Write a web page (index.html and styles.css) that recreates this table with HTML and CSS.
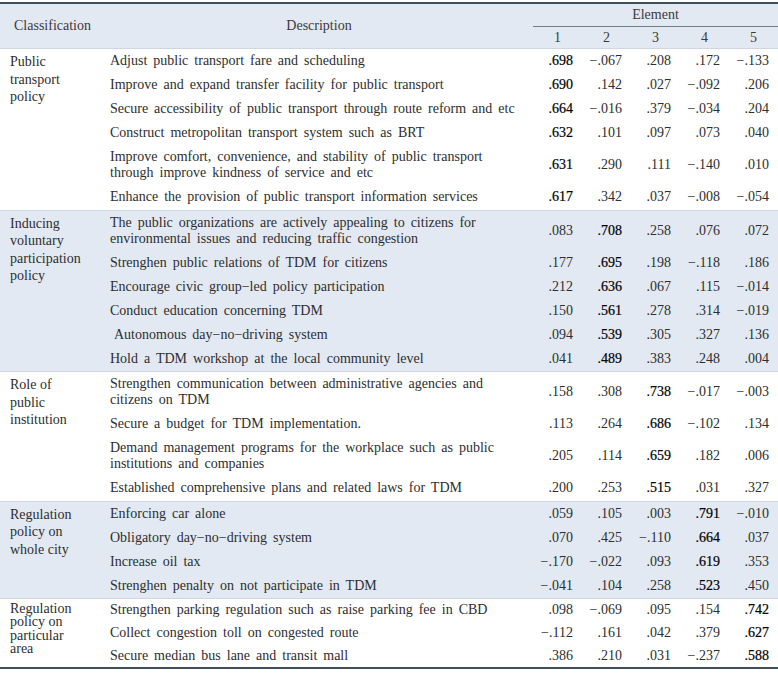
FILE: index.html
```html
<!DOCTYPE html>
<html>
<head>
<meta charset="utf-8">
<link rel="stylesheet" href="styles.css">
</head>
<body>
<table class="tbl">
  <colgroup>
    <col class="c-class"><col class="c-desc"><col class="c-num"><col class="c-num"><col class="c-num"><col class="c-num"><col class="c-num">
  </colgroup>
  <thead>
    <tr class="h1">
      <th rowspan="2" class="hc">Classification</th>
      <th rowspan="2" class="hc">Description</th>
      <th colspan="5" class="el">Element</th>
    </tr>
    <tr class="h2">
      <th>1</th><th>2</th><th>3</th><th>4</th><th>5</th>
    </tr>
  </thead>
  <tbody class="grp">
    <tr><td rowspan="6" class="cls">Public<br>transport<br>policy</td><td class="d">Adjust public transport fare and scheduling</td><td class="n hi">.698</td><td class="n">−.067</td><td class="n">.208</td><td class="n">.172</td><td class="n">−.133</td></tr>
    <tr><td class="d">Improve and expand transfer facility for public transport</td><td class="n hi">.690</td><td class="n">.142</td><td class="n">.027</td><td class="n">−.092</td><td class="n">.206</td></tr>
    <tr><td class="d">Secure accessibility of public transport through route reform and etc</td><td class="n hi">.664</td><td class="n">−.016</td><td class="n">.379</td><td class="n">−.034</td><td class="n">.204</td></tr>
    <tr><td class="d">Construct metropolitan transport system such as BRT</td><td class="n hi">.632</td><td class="n">.101</td><td class="n">.097</td><td class="n">.073</td><td class="n">.040</td></tr>
    <tr><td class="d">Improve comfort, convenience, and stability of public transport<br>through improve kindness of service and etc</td><td class="n hi">.631</td><td class="n">.290</td><td class="n">.111</td><td class="n">−.140</td><td class="n">.010</td></tr>
    <tr><td class="d">Enhance the provision of public transport information services</td><td class="n hi">.617</td><td class="n">.342</td><td class="n">.037</td><td class="n">−.008</td><td class="n">−.054</td></tr>
  </tbody>
  <tbody class="grp shade">
    <tr><td rowspan="6" class="cls">Inducing<br>voluntary<br>participation<br>policy</td><td class="d">The public organizations are actively appealing to citizens for<br>environmental issues and reducing traffic congestion</td><td class="n">.083</td><td class="n hi">.708</td><td class="n">.258</td><td class="n">.076</td><td class="n">.072</td></tr>
    <tr><td class="d">Strenghen public relations of TDM for citizens</td><td class="n">.177</td><td class="n hi">.695</td><td class="n">.198</td><td class="n">−.118</td><td class="n">.186</td></tr>
    <tr><td class="d">Encourage civic group−led policy participation</td><td class="n">.212</td><td class="n hi">.636</td><td class="n">.067</td><td class="n">.115</td><td class="n">−.014</td></tr>
    <tr><td class="d">Conduct education concerning TDM</td><td class="n">.150</td><td class="n hi">.561</td><td class="n">.278</td><td class="n">.314</td><td class="n">−.019</td></tr>
    <tr><td class="d ind">Autonomous day−no−driving system</td><td class="n">.094</td><td class="n hi">.539</td><td class="n">.305</td><td class="n">.327</td><td class="n">.136</td></tr>
    <tr><td class="d">Hold a TDM workshop at the local community level</td><td class="n">.041</td><td class="n hi">.489</td><td class="n">.383</td><td class="n">.248</td><td class="n">.004</td></tr>
  </tbody>
  <tbody class="grp">
    <tr><td rowspan="4" class="cls">Role of<br>public<br>institution</td><td class="d">Strengthen communication between administrative agencies and<br>citizens on TDM</td><td class="n">.158</td><td class="n">.308</td><td class="n hi">.738</td><td class="n">−.017</td><td class="n">−.003</td></tr>
    <tr><td class="d">Secure a budget for TDM implementation.</td><td class="n">.113</td><td class="n">.264</td><td class="n hi">.686</td><td class="n">−.102</td><td class="n">.134</td></tr>
    <tr><td class="d">Demand management programs for the workplace such as public<br>institutions and companies</td><td class="n">.205</td><td class="n">.114</td><td class="n hi">.659</td><td class="n">.182</td><td class="n">.006</td></tr>
    <tr><td class="d">Established comprehensive plans and related laws for TDM</td><td class="n">.200</td><td class="n">.253</td><td class="n hi">.515</td><td class="n">.031</td><td class="n">.327</td></tr>
  </tbody>
  <tbody class="grp shade">
    <tr><td rowspan="4" class="cls">Regulation<br>policy on<br>whole city</td><td class="d">Enforcing car alone</td><td class="n">.059</td><td class="n">.105</td><td class="n">.003</td><td class="n hi">.791</td><td class="n">−.010</td></tr>
    <tr><td class="d">Obligatory day−no−driving system</td><td class="n">.070</td><td class="n">.425</td><td class="n">−.110</td><td class="n hi">.664</td><td class="n">.037</td></tr>
    <tr><td class="d">Increase oil tax</td><td class="n">−.170</td><td class="n">−.022</td><td class="n">.093</td><td class="n hi">.619</td><td class="n">.353</td></tr>
    <tr><td class="d">Strenghen penalty on not participate in TDM</td><td class="n">−.041</td><td class="n">.104</td><td class="n">.258</td><td class="n hi">.523</td><td class="n">.450</td></tr>
  </tbody>
  <tbody class="grp last">
    <tr><td rowspan="3" class="cls tight">Regulation<br>policy on<br>particular<br>area</td><td class="d">Strengthen parking regulation such as raise parking fee in CBD</td><td class="n">.098</td><td class="n">−.069</td><td class="n">.095</td><td class="n">.154</td><td class="n hi">.742</td></tr>
    <tr><td class="d">Collect congestion toll on congested route</td><td class="n">−.112</td><td class="n">.161</td><td class="n">.042</td><td class="n">.379</td><td class="n hi">.627</td></tr>
    <tr><td class="d">Secure median bus lane and transit mall</td><td class="n">.386</td><td class="n">.210</td><td class="n">.031</td><td class="n">−.237</td><td class="n hi">.588</td></tr>
  </tbody>
</table>
</body>
</html>
```

FILE: styles.css
```css
html, body {
  margin: 0;
  padding: 0;
  background: #ffffff;
}
body {
  padding-top: 2px;
  font-family: "Liberation Serif", "Times New Roman", serif;
  font-size: 14px;
  color: #2e2e2e;
}
.tbl {
  width: 778px;
  border-collapse: collapse;
  table-layout: fixed;
  border-top: 2px solid #3f4f5e;
  border-bottom: 2px solid #3f4f5e;
}
.c-class { width: 105px; }
.c-desc { width: 428px; }
.c-num { width: 49px; }

thead th {
  font-weight: normal;
  background: #e2e9f3;
  color: #3a3a3a;
  line-height: 16px;
  padding: 0;
}
.h1 th { height: 22px; }
.h1 .el {
  border-bottom: 1px solid #6e7d8c;
  vertical-align: middle;
}
.h2 th { height: 21px; text-align: center; }
.hc { text-align: center; vertical-align: middle; }

td {
  padding: 4px 0 4.1px;
  line-height: 16px;
  word-spacing: 2.5px;
}
.grp { border-top: 1px solid #cdd6e1; }
.shade td { background: #e2e9f3; }
.cls {
  vertical-align: top;
  padding: 4px 4px 0 10px;
  line-height: 17.5px;
  word-spacing: 0;
}
.cls.tight { line-height: 13.5px; padding-top: 3px; }
.d {
  padding-left: 5px;
  white-space: nowrap;
  vertical-align: middle;
}
.d.ind { padding-left: 9px; }
.n {
  text-align: right;
  padding-right: 9px;
  vertical-align: middle;
  word-spacing: 0;
}
.hi {
  color: #000;
  -webkit-text-stroke: 0.2px #000;
}
.last td { padding-top: 3.4px; padding-bottom: 3.4px; }
.last .cls { padding-top: 3px; }
```
